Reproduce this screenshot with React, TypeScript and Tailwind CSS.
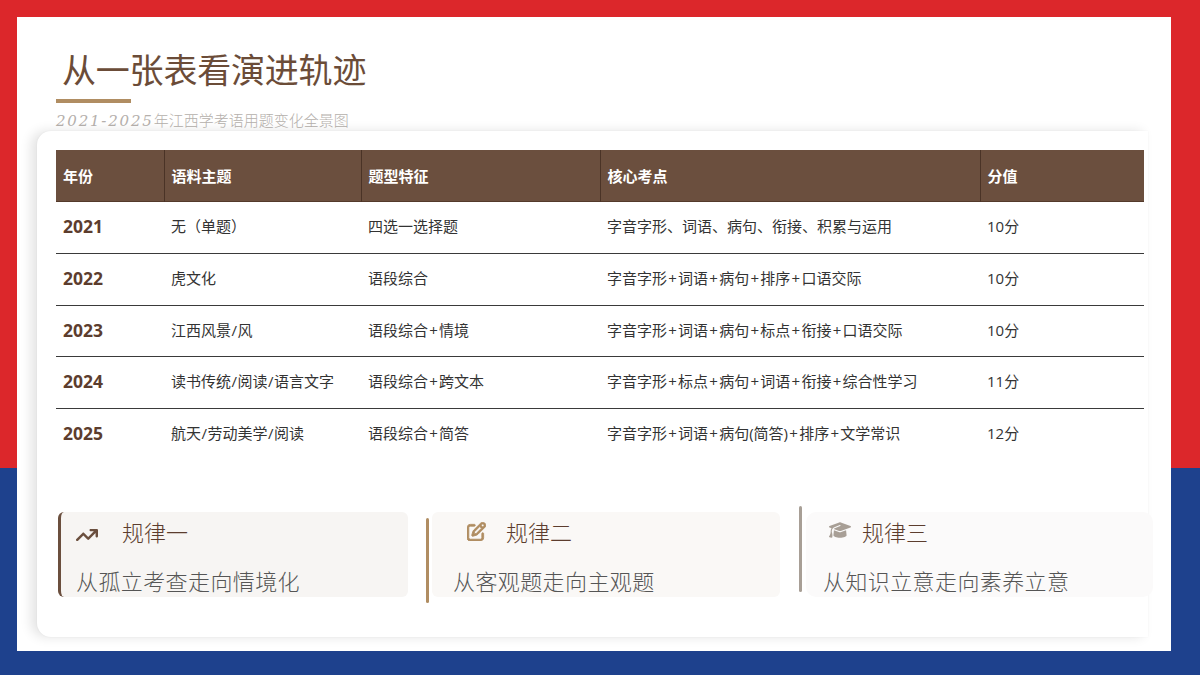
import { Fragment } from "react";
import { FaArrowTrendUp, FaGraduationCap, FaRegPenToSquare } from "react-icons/fa6";

const rows = [
  ["2021", "无（单题）", "四选一选择题", "字音字形、词语、病句、衔接、积累与运用", "10分"],
  ["2022", "虎文化", "语段综合", "字音字形+词语+病句+排序+口语交际", "10分"],
  ["2023", "江西风景/风", "语段综合+情境", "字音字形+词语+病句+标点+衔接+口语交际", "10分"],
  ["2024", "读书传统/阅读/语言文字", "语段综合+跨文本", "字音字形+标点+病句+词语+衔接+综合性学习", "11分"],
  ["2025", "航天/劳动美学/阅读", "语段综合+简答", "字音字形+词语+病句(简答)+排序+文学常识", "12分"],
];

const heads = ["年份", "语料主题", "题型特征", "核心考点", "分值"];

const sans = "font-['Open_Sans','Noto_Sans_CJK_SC',sans-serif]";
const cjk = "font-['Noto_Sans_CJK_SC',sans-serif]";

// the plus and slash sit wider in the picture than in Open Sans
const Cell = ({ text }: { text: string }) => (
  <>
    {text.split(/([+/])/).map((part, i) => (
      <Fragment key={i}>
        {part === "+" ? (
          <span className="px-[1.25px]">+</span>
        ) : part === "/" ? (
          <span className="px-[0.5px]">/</span>
        ) : (
          part
        )}
      </Fragment>
    ))}
  </>
);

export default function App() {
  return (
    <div className="flex h-[675px] w-[1200px] overflow-hidden bg-[linear-gradient(#dc272b_468px,#1e418d_468px)] pt-[17px] pr-[29px] pb-[24px] pl-[17px]">
      <div className="flex flex-1 flex-col bg-white">
        <div className="h-[114px] pl-[39px]">
          <h1 className={`${cjk} pt-[30px] pl-[6px] text-[34px] leading-[44px] tracking-[-0.2px] font-normal text-[#6b4c38]`}>
            从一张表看演进轨迹
          </h1>
          <div className="mt-[8px] h-[4px] w-[75px] bg-[#b08d62]" />
          <p className={`mt-[8px] text-[15px] leading-[18px] font-light text-[#b5b0ac] ${cjk}`}>
            <span className="font-['DejaVu_Serif',serif] text-[15px] tracking-[1.8px] italic">2021-2025</span>
            年江西学考语用题变化全景图
          </p>
        </div>

        <div className="mr-[23px] ml-[20px] flex h-[506px] flex-col rounded-l-[14px] bg-white pt-[19px] pr-[4px] pl-[19px] shadow-[-6px_0_12px_rgba(0,0,0,0.11),0_0_2px_rgba(0,0,0,0.06)]">
          <table className={`w-[1088px] table-fixed border-collapse text-[15px] text-[#333] ${sans}`}>
            <colgroup>
              <col className="w-[108px]" />
              <col className="w-[197px]" />
              <col className="w-[239px]" />
              <col className="w-[380px]" />
              <col className="w-[164px]" />
            </colgroup>
            <thead>
              <tr className="h-[51px] border-b border-[#543a2b] bg-[#6b4f3e] text-white">
                {heads.map((h, i) => (
                  <th
                    key={h}
                    className={`px-[7px] pt-[2px] text-left text-[15px] font-bold ${i > 0 ? "border-l border-[#4a3326]" : ""}`}
                  >
                    {h}
                  </th>
                ))}
              </tr>
            </thead>
            <tbody>
              {rows.map((row, i) => (
                <tr
                  key={row[0]}
                  className={`${i === 0 ? "h-[52.6px]" : "h-[51.6px]"} ${i < 4 ? "border-b border-[#3a3a3a]" : ""}`}
                >
                  {row.map((cell, j) => (
                    <td
                      key={j}
                      className={
                        j === 0
                          ? "px-[7px] pb-[2px] text-[17.5px] font-bold text-[#5c3d2e]"
                          : "px-[7px] pb-[2px] whitespace-nowrap"
                      }
                    >
                      <Cell text={cell} />
                    </td>
                  ))}
                </tr>
              ))}
            </tbody>
          </table>

          <div className={`mt-[52px] mr-[-9px] ml-[2px] flex ${cjk}`}>
            <div className="relative flex h-[85px] w-[350px] flex-col rounded-[6px] border-l-[3px] border-[#6b4f3e] bg-[#f7f5f3] pl-[15px]">
              <div className="flex h-[40px] items-center">
                <FaArrowTrendUp className="mt-[6px] size-[22px] text-[#6b4f3e]" />
                <span className="ml-[24px] text-[22px] font-light text-[#5c3d2e]">规律一</span>
              </div>
              <p className="mt-[13px] text-[22px] leading-[30px] font-light tracking-[0.4px] text-[#555]">从孤立考查走向情境化</p>
            </div>

            <div className="relative ml-[24px] flex h-[85px] w-[348px] flex-col rounded-[6px] bg-[#faf8f6] pl-[21px]">
              <div className="absolute top-[6px] left-[-6px] h-[85px] w-[3px] rounded-[2px] bg-[#b08d62]" />
              <div className="flex h-[40px] items-center">
                <FaRegPenToSquare className="ml-[14px] size-[19px] stroke-current stroke-[24] text-[#b08d62]" />
                <span className="ml-[20px] text-[22px] font-light text-[#5c3d2e]">规律二</span>
              </div>
              <p className="mt-[13px] text-[22px] leading-[30px] font-light tracking-[0.4px] text-[#555]">从客观题走向主观题</p>
            </div>

            <div className="relative ml-[26px] flex h-[85px] w-[347px] flex-col rounded-[10px] bg-[#fbfafa] pl-[17px]">
              <div className="absolute top-[-6px] left-[-7px] h-[86px] w-[3px] rounded-[2px] bg-[#a89f96]" />
              <div className="flex h-[40px] items-center">
                <FaGraduationCap className="mt-[-4px] ml-[6px] size-[22px] text-[#a89f96]" />
                <span className="ml-[11px] text-[22px] font-light text-[#5c3d2e]">规律三</span>
              </div>
              <p className="mt-[13px] text-[22px] leading-[30px] font-light tracking-[0.4px] text-[#555]">从知识立意走向素养立意</p>
            </div>
          </div>
        </div>
      </div>
    </div>
  );
}
